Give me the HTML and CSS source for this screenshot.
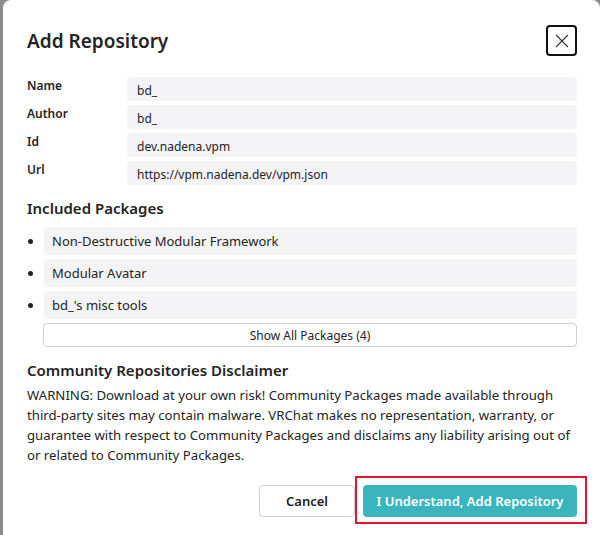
FILE: index.html
```html
<!DOCTYPE html>
<html lang="en">
<head>
    <meta charset="UTF-8">
    <meta name="viewport" content="width=device-width, initial-scale=1.0">
    <title>Add Repository</title>
    <link rel="stylesheet" href="styles.css">
</head>
<body>
    <div class="dialog">
        <div class="dialog-header">
            <h1>Add Repository</h1>
            <button class="close-btn" type="button" aria-label="Close">
                <svg width="16" height="16" viewBox="0 0 16 16">
                    <path d="M2 2 L14 14 M14 2 L2 14" stroke="#333" stroke-width="1.1" fill="none"/>
                </svg>
            </button>
        </div>

        <div class="repo-info">
            <label>Name</label>
            <div class="field">bd_</div>
            <label>Author</label>
            <div class="field">bd_</div>
            <label>Id</label>
            <div class="field">dev.nadena.vpm</div>
            <label>Url</label>
            <div class="field">https://vpm.nadena.dev/vpm.json</div>
        </div>

        <h2>Included Packages</h2>
        <ul class="packages">
            <li><span class="pkg-name">Non-Destructive Modular Framework</span></li>
            <li><span class="pkg-name">Modular Avatar</span></li>
            <li><span class="pkg-name">bd_'s misc tools</span></li>
        </ul>
        <button class="show-all" type="button">Show All Packages (4)</button>

        <h2 class="disclaimer-title">Community Repositories Disclaimer</h2>
        <p class="disclaimer">WARNING: Download at your own risk! Community Packages made available through third-party sites may contain malware. VRChat makes no representation, warranty, or guarantee with respect to Community Packages and disclaims any liability arising out of or related to Community Packages.</p>

        <div class="actions">
            <button class="btn btn-cancel" type="button">Cancel</button>
            <div class="highlight">
                <button class="btn btn-primary" type="button">I Understand, Add Repository</button>
            </div>
        </div>
    </div>
</body>
</html>
```

FILE: styles.css
```css
* {
    margin: 0;
    padding: 0;
    box-sizing: border-box;
}

body {
    background-color: #8c8c8c;
    font-family: 'Noto Sans', 'Open Sans', sans-serif;
    color: #242424;
    overflow: hidden;
}

.dialog {
    margin-left: 3px;
    width: 597px;
    height: 540px;
    background-color: #fff;
    border-radius: 8px 8px 0 0;
    padding: 25px 23px 0 24px;
}

.dialog-header {
    display: flex;
    justify-content: space-between;
    align-items: center;
    height: 31px;
}

h1 {
    font-size: 19px;
    font-weight: 600;
    padding-top: 1px;
}

.close-btn {
    width: 31px;
    height: 31px;
    border: 2px solid #111;
    border-radius: 4px;
    background: #fff;
    display: flex;
    align-items: center;
    justify-content: center;
}

.repo-info {
    display: grid;
    grid-template-columns: 100px 1fr;
    row-gap: 4px;
    margin-top: 21px;
}

.repo-info label {
    font-size: 12px;
    font-weight: 600;
    line-height: 16px;
    padding-top: 1px;
}

.field {
    height: 24px;
    background-color: #f4f3f6;
    border-radius: 4px;
    padding: 5px 10px 0;
    font-size: 12px;
    line-height: 17px;
}

h2 {
    font-size: 15px;
    font-weight: 600;
    line-height: 22px;
    margin-top: 12px;
}

.packages {
    list-style: none;
    display: flex;
    flex-direction: column;
    gap: 4px;
    margin-top: 8px;
}

.packages li {
    display: flex;
    align-items: center;
}

.packages li::before {
    content: '';
    width: 5px;
    height: 5px;
    border-radius: 50%;
    background-color: #222;
    margin: 0 11px 0 1px;
}

.pkg-name {
    flex: 1;
    height: 28px;
    background-color: #f4f3f6;
    border-radius: 4px;
    padding-left: 8px;
    font-size: 13px;
    line-height: 28px;
}

.show-all {
    display: block;
    width: 534px;
    height: 24px;
    margin: 4px 0 0 16px;
    background: #fff;
    border: 1px solid #cfcfcf;
    border-radius: 4px;
    font-family: inherit;
    font-size: 12px;
    color: #242424;
}

.disclaimer-title {
    margin-top: 12px;
}

.disclaimer {
    font-size: 13.2px;
    line-height: 20px;
    margin-top: 4px;
}

.actions {
    display: flex;
    justify-content: flex-end;
    gap: 8px;
    margin-top: 20px;
}

.btn {
    height: 32px;
    border-radius: 4px;
    font-family: inherit;
    font-size: 13px;
    font-weight: 600;
}

.btn-cancel {
    width: 96px;
    background: #fff;
    border: 1px solid #cfcfcf;
    color: #242424;
}

.btn-primary {
    width: 214px;
    background-color: #3ab5be;
    border: none;
    color: #fff;
}

.highlight {
    position: relative;
    display: flex;
}

.highlight::after {
    content: '';
    position: absolute;
    top: -9px;
    right: -10px;
    bottom: -7px;
    left: -8px;
    border: 2px solid #e2162e;
}
```
